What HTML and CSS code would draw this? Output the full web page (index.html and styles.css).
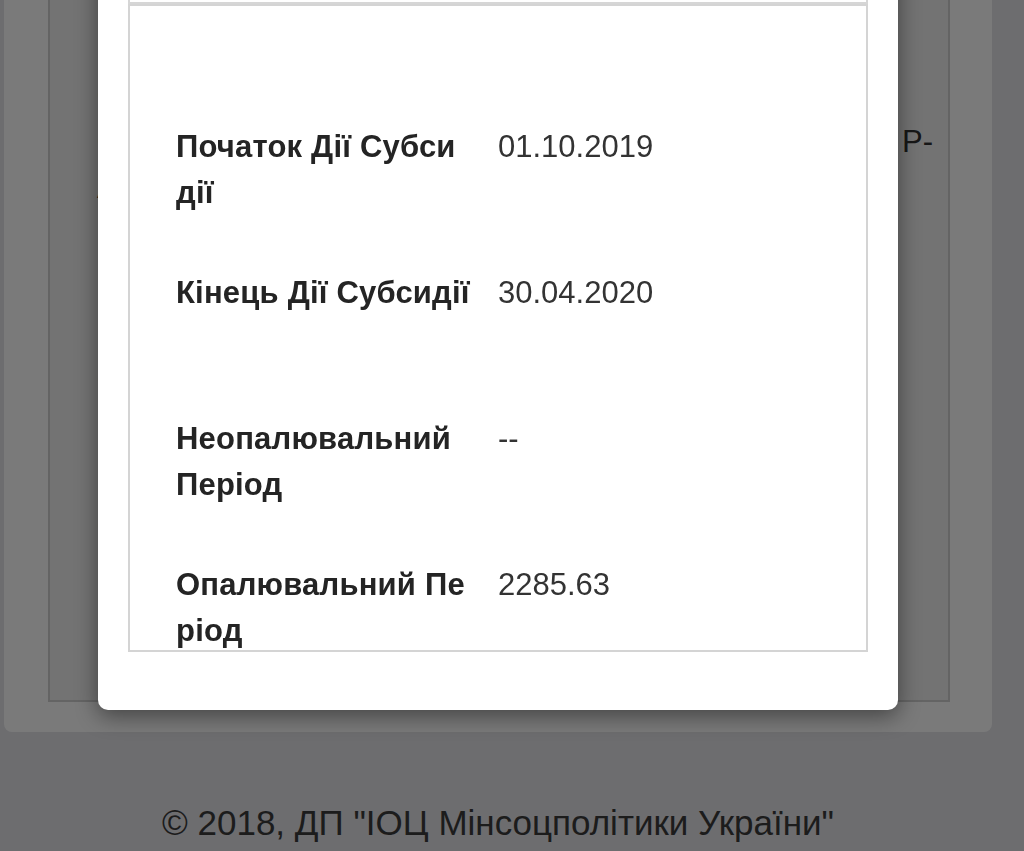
FILE: index.html
```html
<!DOCTYPE html>
<html lang="uk">
<head>
<meta charset="utf-8">
<title>Субсидія</title>
<link rel="stylesheet" href="styles.css">
</head>
<body>
<div class="page">
  <div class="card">
    <div class="card-box">
      <div class="ln">О</div>
      <div class="ln split"><span>О</span><span>Р-</span></div>
      <div class="ln">А</div>
      <div class="ln gap1">С</div>
      <div class="ln gap2">С</div>
    </div>
  </div>
  <footer class="footer">© 2018, ДП "ІОЦ Мінсоцполітики України"</footer>

  <div class="overlay"></div>
  <div class="modal">
    <div class="prev-box"></div>
    <div class="info-box">
      <div class="row">
        <div class="label">Початок Дії Субсидії</div>
        <div class="value">01.10.2019</div>
      </div>
      <div class="row">
        <div class="label">Кінець Дії Субсидії</div>
        <div class="value">30.04.2020</div>
      </div>
      <div class="row">
        <div class="label">Неопалювальний Період</div>
        <div class="value">--</div>
      </div>
      <div class="row">
        <div class="label">Опалювальний Період</div>
        <div class="value">2285.63</div>
      </div>
    </div>
  </div>
</div>
</body>
</html>
```
FILE: styles.css
```css
* { box-sizing: border-box; }
html, body {
  margin: 0;
  padding: 0;
  height: 100%;
  overflow: hidden;
}
body {
  background: #e3e3e9;
  font-family: "Liberation Sans", Arial, Helvetica, sans-serif;
  color: #333;
}
.page {
  position: relative;
  display: flow-root;
  width: 996px;
  height: 851px;
}
.card {
  margin: -60px 4px 0 4px;
  background: #ffffff;
  border-radius: 0 0 8px 8px;
  padding: 0 42px 30px 44px;
}
.card-box {
  height: 762px;
  border: 2px solid #d2d2d2;
  border-top: none;
  background: #f1f1f1;
  padding: 133px 15px 0 47px;
  font-size: 31px;
  line-height: 46px;
  color: #303030;
}
.ln { white-space: nowrap; }
.split {
  display: flex;
  justify-content: space-between;
}
.gap1 { margin-top: 147px; }
.gap2 { margin-top: 100px; }
.footer {
  margin-top: 71px;
  text-align: center;
  font-size: 35px;
  line-height: 40px;
  color: #3c3c3c;
}
.overlay {
  position: fixed;
  inset: 0;
  background: rgba(0, 0, 0, 0.52);
}
.modal {
  position: absolute;
  left: 98px;
  top: -40px;
  width: 800px;
  height: 750px;
  background: #fff;
  border-radius: 10px;
  box-shadow: 0 6px 22px rgba(0, 0, 0, 0.45);
  padding: 0 30px 58px 30px;
  display: flex;
  flex-direction: column;
}
.prev-box {
  height: 44px;
  flex: none;
  border: 2px solid #d6d6d6;
  border-top: none;
}
.info-box {
  flex: 1;
  border: 2px solid #d4d4d4;
  overflow: hidden;
  padding: 118px 0 0 46px;
  display: grid;
  grid-template-columns: 297px 1fr;
  grid-auto-rows: 146px;
  column-gap: 25px;
  font-size: 31px;
  line-height: 46px;
}
.row { display: contents; }
.label {
  font-weight: bold;
  color: #242424;
  word-break: break-all;
  letter-spacing: 0.2px;
}
.value {
  color: #333;
}
```
